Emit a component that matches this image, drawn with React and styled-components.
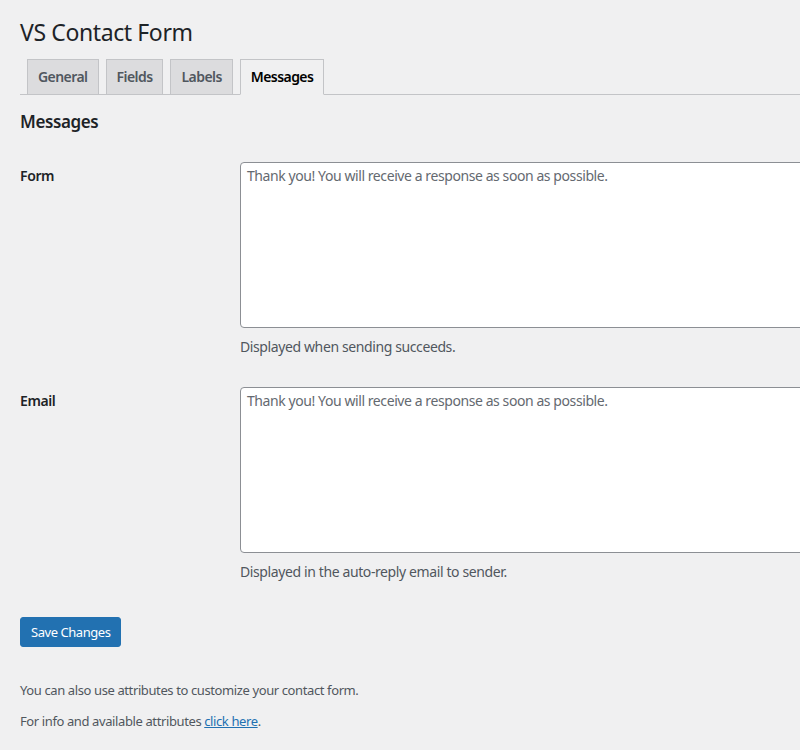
import React from 'react';
import styled, { createGlobalStyle } from 'styled-components';

// WordPress admin palette
const colors = {
  page: '#f0f0f1',
  text: '#1d2327',
  muted: '#50575e',
  placeholder: '#646970',
  border: '#c3c4c7',
  tab: '#dcdcde',
  input: '#8c8f94',
  primary: '#2271b1',
};

const GlobalStyle = createGlobalStyle`
  html, body {
    margin: 0;
    padding: 0;
    background: ${colors.page};
    overflow: hidden;
  }
  body {
    font-family: "Segoe UI", "Noto Sans", "Open Sans", sans-serif;
    font-size: 13px;
    letter-spacing: -0.03em;
    color: ${colors.text};
  }
`;

const Wrap = styled.div`
  padding: 17px 0 0 20px;
  width: 1200px;
`;

const Title = styled.h1`
  margin: 0;
  font-size: 23px;
  font-weight: 400;
  line-height: 30px;
`;

const TabBar = styled.nav`
  display: flex;
  margin-top: 12px;
  border-bottom: 1px solid ${colors.border};
  width: 780px;
`;

const Tab = styled.a`
  margin-left: 7px;
  margin-bottom: -1px;
  padding: 5px 10px;
  font-size: 14px;
  font-weight: 600;
  line-height: 24px;
  letter-spacing: -0.04em;
  border: 1px solid ${colors.border};
  border-bottom: 1px solid ${({ $active }) => ($active ? colors.page : colors.border)};
  background: ${({ $active }) => ($active ? colors.page : colors.tab)};
  color: ${({ $active }) => ($active ? '#000' : colors.muted)};
  text-decoration: none;
`;

const SectionTitle = styled.h2`
  margin: 15px 0 0;
  font-size: 17px;
  font-weight: 600;
  line-height: 24px;
`;

const Rows = styled.div`
  display: flex;
  flex-direction: column;
  gap: 31px;
  margin-top: 28px;
`;

const Row = styled.div`
  display: grid;
  grid-template-columns: 220px 1fr;
`;

const Label = styled.label`
  padding-top: 5px;
  font-size: 14px;
  font-weight: 600;
  line-height: 18px;
`;

const Field = styled.div`
  display: flex;
  flex-direction: column;
`;

const TextArea = styled.textarea`
  box-sizing: border-box;
  width: 620px;
  height: 166px;
  margin: 0;
  padding: 2px 6px;
  border: 1px solid ${colors.input};
  border-radius: 4px;
  background: #fff;
  font-family: inherit;
  font-size: 14px;
  line-height: 21px;
  letter-spacing: -0.03em;
  color: ${colors.text};
  resize: none;

  &::placeholder {
    color: ${colors.placeholder};
    opacity: 1;
  }
`;

const Description = styled.p`
  margin: 10px 0 0;
  font-size: 14px;
  line-height: 18px;
  color: ${colors.muted};
`;

const SaveButton = styled.button`
  margin-top: 36px;
  height: 30px;
  padding: 0 10px;
  border: 1px solid ${colors.primary};
  border-radius: 3px;
  background: ${colors.primary};
  color: #fff;
  font-family: inherit;
  font-size: 13px;
  line-height: 28px;
  letter-spacing: -0.035em;
  cursor: pointer;
`;

const Note = styled.p`
  margin: ${({ $first }) => ($first ? '34px' : '12px')} 0 0;
  font-size: 13px;
  line-height: 19px;
  color: ${colors.muted};

  a {
    color: ${colors.primary};
  }
`;

const fields = [
  { id: 'form', label: 'Form', hint: 'Displayed when sending succeeds.' },
  { id: 'email', label: 'Email', hint: 'Displayed in the auto-reply email to sender.' },
];

const tabs = ['General', 'Fields', 'Labels', 'Messages'];

const App = () => (
  <>
    <GlobalStyle />
    <Wrap>
      <Title>VS Contact Form</Title>
      <TabBar>
        {tabs.map((t) => (
          <Tab key={t} href="#" $active={t === 'Messages'}>{t}</Tab>
        ))}
      </TabBar>
      <SectionTitle>Messages</SectionTitle>
      <Rows>
        {fields.map((f) => (
          <Row key={f.id}>
            <Label htmlFor={f.id}>{f.label}</Label>
            <Field>
              <TextArea
                id={f.id}
                placeholder="Thank you! You will receive a response as soon as possible."
              />
              <Description>{f.hint}</Description>
            </Field>
          </Row>
        ))}
      </Rows>
      <SaveButton>Save Changes</SaveButton>
      <Note $first>You can also use attributes to customize your contact form.</Note>
      <Note>For info and available attributes <a href="#">click here</a>.</Note>
    </Wrap>
  </>
);

export default App;
